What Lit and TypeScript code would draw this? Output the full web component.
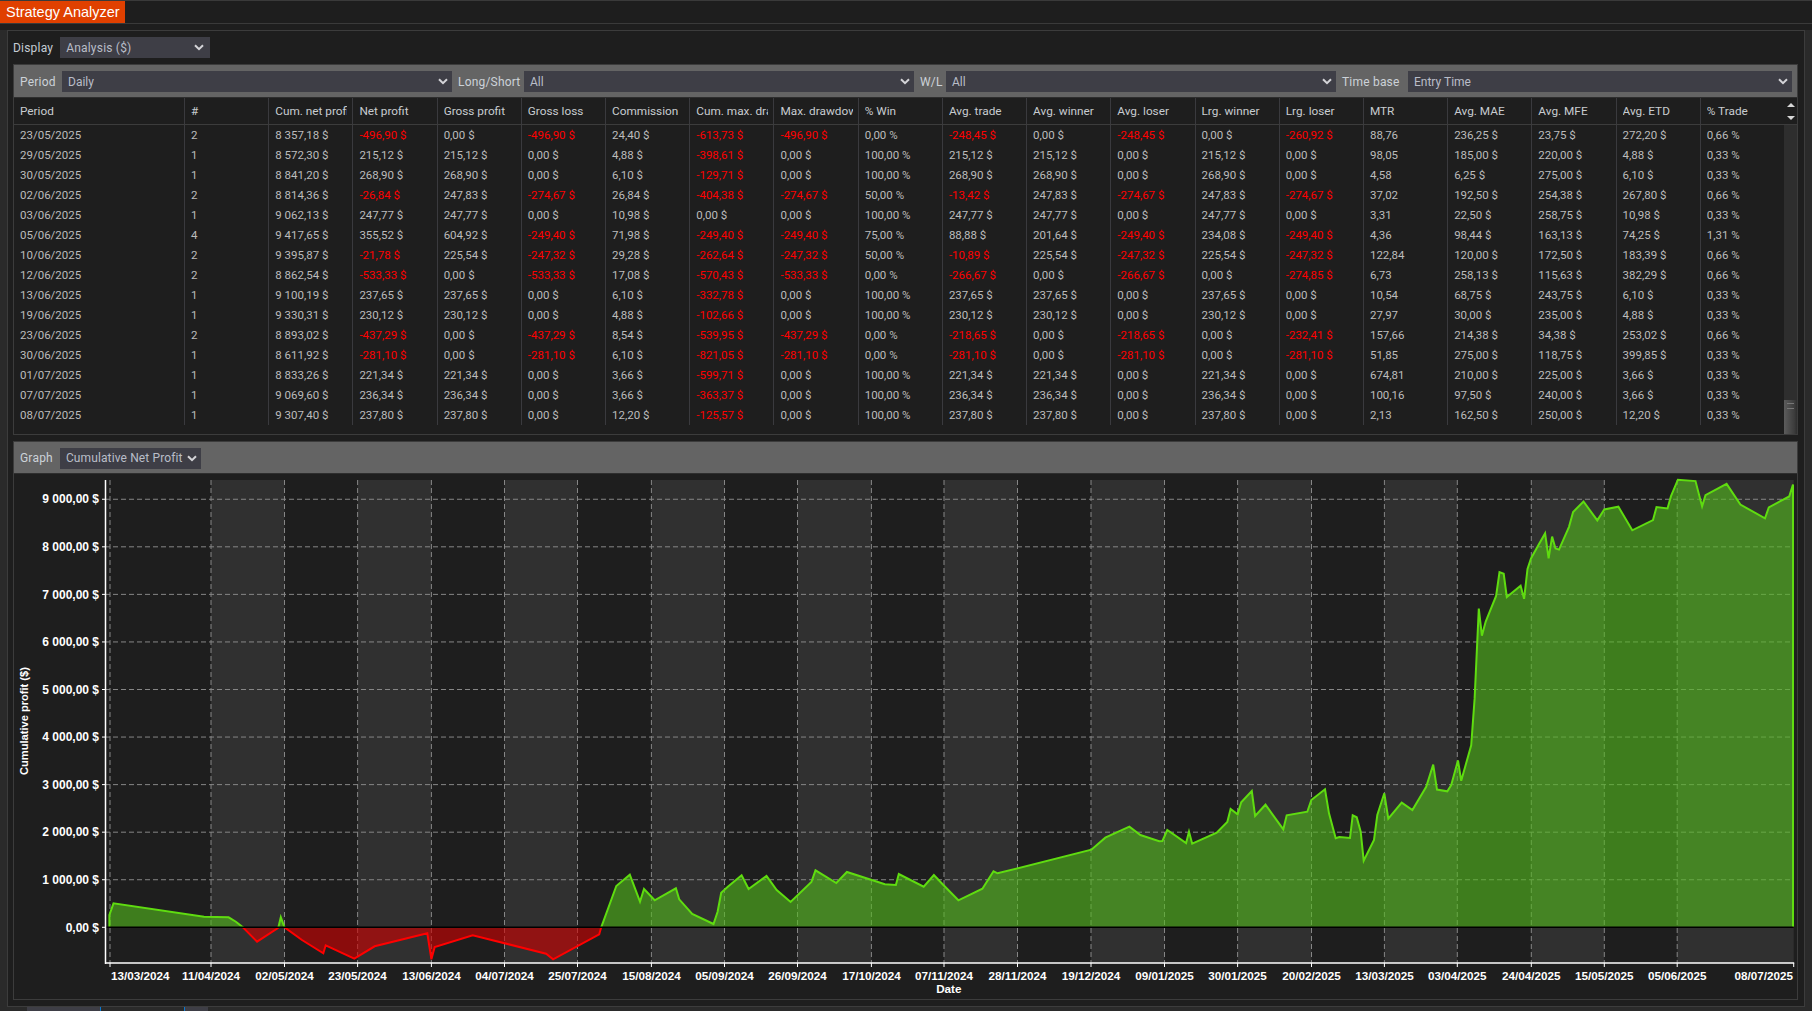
import {LitElement, html, css, svg} from 'lit';
import {customElement} from 'lit/decorators.js';

const columns = [
  'Period', '#', 'Cum. net profit', 'Net profit', 'Gross profit', 'Gross loss', 'Commission',
  'Cum. max. drawdown', 'Max. drawdown', '% Win', 'Avg. trade', 'Avg. winner', 'Avg. loser',
  'Lrg. winner', 'Lrg. loser', 'MTR', 'Avg. MAE', 'Avg. MFE', 'Avg. ETD', '% Trade',
];

const rows = [
  '23/05/2025|2|8 357,18 $|-496,90 $|0,00 $|-496,90 $|24,40 $|-613,73 $|-496,90 $|0,00 %|-248,45 $|0,00 $|-248,45 $|0,00 $|-260,92 $|88,76|236,25 $|23,75 $|272,20 $|0,66 %',
  '29/05/2025|1|8 572,30 $|215,12 $|215,12 $|0,00 $|4,88 $|-398,61 $|0,00 $|100,00 %|215,12 $|215,12 $|0,00 $|215,12 $|0,00 $|98,05|185,00 $|220,00 $|4,88 $|0,33 %',
  '30/05/2025|1|8 841,20 $|268,90 $|268,90 $|0,00 $|6,10 $|-129,71 $|0,00 $|100,00 %|268,90 $|268,90 $|0,00 $|268,90 $|0,00 $|4,58|6,25 $|275,00 $|6,10 $|0,33 %',
  '02/06/2025|2|8 814,36 $|-26,84 $|247,83 $|-274,67 $|26,84 $|-404,38 $|-274,67 $|50,00 %|-13,42 $|247,83 $|-274,67 $|247,83 $|-274,67 $|37,02|192,50 $|254,38 $|267,80 $|0,66 %',
  '03/06/2025|1|9 062,13 $|247,77 $|247,77 $|0,00 $|10,98 $|0,00 $|0,00 $|100,00 %|247,77 $|247,77 $|0,00 $|247,77 $|0,00 $|3,31|22,50 $|258,75 $|10,98 $|0,33 %',
  '05/06/2025|4|9 417,65 $|355,52 $|604,92 $|-249,40 $|71,98 $|-249,40 $|-249,40 $|75,00 %|88,88 $|201,64 $|-249,40 $|234,08 $|-249,40 $|4,36|98,44 $|163,13 $|74,25 $|1,31 %',
  '10/06/2025|2|9 395,87 $|-21,78 $|225,54 $|-247,32 $|29,28 $|-262,64 $|-247,32 $|50,00 %|-10,89 $|225,54 $|-247,32 $|225,54 $|-247,32 $|122,84|120,00 $|172,50 $|183,39 $|0,66 %',
  '12/06/2025|2|8 862,54 $|-533,33 $|0,00 $|-533,33 $|17,08 $|-570,43 $|-533,33 $|0,00 %|-266,67 $|0,00 $|-266,67 $|0,00 $|-274,85 $|6,73|258,13 $|115,63 $|382,29 $|0,66 %',
  '13/06/2025|1|9 100,19 $|237,65 $|237,65 $|0,00 $|6,10 $|-332,78 $|0,00 $|100,00 %|237,65 $|237,65 $|0,00 $|237,65 $|0,00 $|10,54|68,75 $|243,75 $|6,10 $|0,33 %',
  '19/06/2025|1|9 330,31 $|230,12 $|230,12 $|0,00 $|4,88 $|-102,66 $|0,00 $|100,00 %|230,12 $|230,12 $|0,00 $|230,12 $|0,00 $|27,97|30,00 $|235,00 $|4,88 $|0,33 %',
  '23/06/2025|2|8 893,02 $|-437,29 $|0,00 $|-437,29 $|8,54 $|-539,95 $|-437,29 $|0,00 %|-218,65 $|0,00 $|-218,65 $|0,00 $|-232,41 $|157,66|214,38 $|34,38 $|253,02 $|0,66 %',
  '30/06/2025|1|8 611,92 $|-281,10 $|0,00 $|-281,10 $|6,10 $|-821,05 $|-281,10 $|0,00 %|-281,10 $|0,00 $|-281,10 $|0,00 $|-281,10 $|51,85|275,00 $|118,75 $|399,85 $|0,33 %',
  '01/07/2025|1|8 833,26 $|221,34 $|221,34 $|0,00 $|3,66 $|-599,71 $|0,00 $|100,00 %|221,34 $|221,34 $|0,00 $|221,34 $|0,00 $|674,81|210,00 $|225,00 $|3,66 $|0,33 %',
  '07/07/2025|1|9 069,60 $|236,34 $|236,34 $|0,00 $|3,66 $|-363,37 $|0,00 $|100,00 %|236,34 $|236,34 $|0,00 $|236,34 $|0,00 $|100,16|97,50 $|240,00 $|3,66 $|0,33 %',
  '08/07/2025|1|9 307,40 $|237,80 $|237,80 $|0,00 $|12,20 $|-125,57 $|0,00 $|100,00 %|237,80 $|237,80 $|0,00 $|237,80 $|0,00 $|2,13|162,50 $|250,00 $|12,20 $|0,33 %',
].map((r) => r.split('|'));

// x position of each date tick on the chart
const ticks: [number, string][] = [
  [110, '13/03/2024'], [211, '11/04/2024'], [284.5, '02/05/2024'], [357.6, '23/05/2024'],
  [431.4, '13/06/2024'], [504.5, '04/07/2024'], [577.5, '25/07/2024'], [651.4, '15/08/2024'],
  [724.5, '05/09/2024'], [797.5, '26/09/2024'], [871.4, '17/10/2024'], [944, '07/11/2024'],
  [1017.5, '28/11/2024'], [1091, '19/12/2024'], [1164.5, '09/01/2025'], [1237.6, '30/01/2025'],
  [1311.5, '20/02/2025'], [1384.4, '13/03/2025'], [1457.3, '03/04/2025'], [1531.3, '24/04/2025'],
  [1604.3, '15/05/2025'], [1677.2, '05/06/2025'],
];
const chartRight = 1793.7;
const chartTop = 480;
const chartBottom = 963;
const zeroY = 927.3;
const stepY = 47.56;

const equity = `109.4,927.3 109.4,915 113.5,903.3 204,916.7 228.6,917.3 235.9,921.7 242.9,927.3 257.1,941.7
277.6,928.3 278.4,927.3 280.8,917.3 284.5,927.3 302,940 323.3,953.3 325.7,945.3 354.3,958.7 374.7,946.3
427.3,933.3 431.4,959.3 434.7,947 472.7,935.3 546.1,953.7 553.1,959.3 599.2,934.3 601.2,927.3 616.3,886
629.8,874.7 640,901.7 644,889 654.7,900.3 675.9,888.3 679.2,899.3 692.2,914 713.5,924 717.6,911.7
721.2,892.7 727.8,886.7 741.6,875.3 748.6,889 766.5,876 776.7,890 790.6,902 811.4,882 815.5,870.3
836.3,883 846.9,872 884.9,884.3 895.9,885 898.8,874 923.7,886.7 933.9,875 944.1,885.7 958.4,900.3
982.4,888.7 993.5,871.3 997.6,873.3 1091.4,849.7 1105.3,837.7 1129.4,826.7 1140.4,835 1159.2,841.3
1162.4,841 1167.3,830 1186.1,843 1189,831.7 1192.2,843.7 1216.7,832.7 1227.3,822 1230.6,809 1237.6,814.3
1241.2,802.3 1251.8,791 1255.1,816 1265.5,804.7 1283.3,829.3 1286.7,815.3 1307.3,811.7 1311.3,800
1325,789.3 1329,813.3 1335.7,838.3 1339.3,837 1350,838 1352.7,815.3 1356.7,817.3 1360.7,831.7 1363.7,860.7
1374,840 1377.3,815 1384.3,793.3 1388.3,818.7 1401.7,802.6 1412.4,810 1426.2,786.8 1433.2,764.6 1437,789.6
1447.3,791.3 1451.1,785.4 1458,760.4 1461.2,780.8 1471.2,745.3 1474.6,698.9 1478.8,608.6 1481.9,635.7
1485.7,621.6 1496.1,596 1499.5,572.1 1503.7,573.8 1506.8,597 1520.6,585.8 1524.1,598.8 1527.5,568.9
1531,558.4 1537.9,546 1545.1,533.4 1548.6,558.4 1552.1,536.6 1555.5,548.5 1559,549.6 1569,526.8 1573.1,512
1583.5,501.5 1597.3,520.4 1604.3,509.5 1618.4,506.7 1632.3,530.3 1653,520.1 1656.5,507.1 1667.5,508.5
1671,496.2 1677.9,479.7 1695.5,481.1 1702.1,506.4 1705.5,495.1 1726.6,483.9 1740.4,504.6 1765,518.3
1768.8,507.4 1789.2,496.5 1793,484.6 1793,927.3`;

const chevron = html`<svg class="chev" viewBox="0 0 10 7"><path d="M1 1.2l4 4 4-4" fill="none" stroke="currentColor" stroke-width="2"/></svg>`;

@customElement('app-root')
export class AppRoot extends LitElement {
  static override styles = css`
    * {
      box-sizing: border-box;
    }

    :host {
      display: block;
      width: 1812px;
      height: 1011px;
      overflow: hidden;
      background: #1e1e1e;
      font-family: "Roboto", "Liberation Sans", sans-serif;
      font-size: 11.5px;
      color: #bcbcbc;
    }

    .top {
      height: 24px;
      padding-top: 1px;
      border-top: 1px solid #3a3a3a;
      border-bottom: 1px solid #3a3a3a;
    }

    .tab {
      width: 125px;
      height: 22px;
      margin-top: -1px;
      background: #e04000;
      color: #fff;
      font-family: "Liberation Sans", sans-serif;
      font-size: 14.5px;
      line-height: 22px;
      padding-left: 6px;
    }

    .shell {
      height: 987px;
      padding: 6px 7px 0;
      background: linear-gradient(#1e1e1e 6px, #2a2a2a 6px);
    }

    .outer {
      height: 977px;
      border: 1px solid #3c3c3c;
      background: #1e1e1e;
      padding: 6px 6px 6px 5px;
      display: flex;
      flex-direction: column;
    }

    .display {
      display: flex;
      align-items: center;
      height: 21px;
      gap: 6px;
      margin-bottom: 6px;
      font-size: 12px;
      color: #c4ccd4;
      letter-spacing: .2px;
    }

    .sel {
      display: flex;
      align-items: center;
      justify-content: space-between;
      height: 21px;
      padding: 0 4px 0 6px;
      background: #3e3e46;
      color: #b9bdc8;
      font-size: 12px;
      white-space: nowrap;
    }

    .chev {
      width: 10px;
      height: 7px;
      color: #d4d4d8;
      flex: none;
    }

    .display .sel {
      width: 150px;
      margin-left: 1px;
      padding-right: 6px;
    }

    .panel {
      border: 1px solid #3c3c3c;
      display: flex;
      flex-direction: column;
    }

    .table-panel {
      height: 371px;
      margin-bottom: 6px;
    }

    .chart-panel {
      height: 559px;
    }

    .band {
      height: 33px;
      padding: 1px 6px 0;
      background: #646464;
      border-bottom: 1px solid #2e2e2e;
      flex: none;
      font-size: 12px;
      color: #ccd2d8;
      letter-spacing: .2px;
    }

    .filters {
      display: grid;
      grid-template-columns: 36px 390px 60px 390px 20px 390px 60px 384px;
      gap: 6px;
      align-items: center;
    }

    .graph-band {
      display: flex;
      align-items: center;
      gap: 6px;
      height: 32px;
    }

    .band .label {
      white-space: nowrap;
    }

    .band .sel {
      letter-spacing: 0;
    }

    .band .graph-sel {
      width: 141px;
      margin-left: 1px;
      letter-spacing: .12px;
    }

    .tablewrap {
      display: flex;
      flex: 1;
      min-height: 0;
    }

    .grid {
      flex: 1;
      min-width: 0;
      padding-bottom: 8px;
    }

    .row {
      display: grid;
      grid-template-columns: 170px repeat(19, 1fr);
      height: 20px;
    }

    .row.head {
      height: 27px;
      border-bottom: 1px solid #3c3c3c;
      color: #c8ccd0;
      font-size: 11.8px;
    }

    .cell {
      padding: 0 5px 0 6px;
      line-height: 21px;
      white-space: nowrap;
      overflow: hidden;
      border-left: 1px solid #3a3a3e;
    }

    .head .cell {
      line-height: 26px;
    }

    /* long titles are cut off before the next column, at the content edge */
    .head .cell span {
      display: block;
      overflow: hidden;
    }

    .cell:first-child {
      border-left: 0;
    }

    .neg {
      color: #ff0000;
    }

    .scroll {
      width: 13px;
      display: flex;
      flex-direction: column;
      background: #2e2e2e;
    }

    .arrows {
      height: 27px;
      background: #1e1e1e;
      border-bottom: 1px solid #3c3c3c;
      display: flex;
      flex-direction: column;
      align-items: center;
      justify-content: center;
      gap: 9px;
    }

    .arrows svg {
      width: 8px;
      height: 4px;
      display: block;
    }

    .track {
      flex: 1;
      display: flex;
      flex-direction: column;
      justify-content: flex-end;
    }

    .thumb {
      height: 34px;
      background: linear-gradient(90deg, #5c5c5c, #3c3c3c 80%, #2e2e2e);
    }

    .thumb::before {
      content: "";
      display: block;
      height: 4px;
      margin: 3px 3px 0;
      border-top: 1px solid #777;
      border-bottom: 1px solid #777;
    }

    .chart {
      display: block;
      flex: none;
    }

    .chart text {
      font-family: "Liberation Sans", sans-serif;
      font-weight: 700;
      font-size: 11.7px;
      fill: #fff;
    }

    .chart .ylabel {
      font-size: 12px;
    }

    .chart .ytitle {
      font-size: 11.1px;
    }

    .bottom {
      display: flex;
      height: 4px;
    }

    .bottom .t1 {
      margin-left: 20px;
      width: 74px;
      background: #3e3e46;
      border-right: 1px solid #0a78d0;
    }

    .bottom .t2 {
      margin-left: 83px;
      width: 24px;
      background: #3e3e46;
      border-left: 1px solid #0a78d0;
    }
  `;

  renderChart() {
    const bands = [];
    for (let i = 1; i < ticks.length; i += 2) {
      const x1 = ticks[i][0];
      const x2 = i + 1 < ticks.length ? ticks[i + 1][0] : chartRight;
      bands.push(svg`<rect x=${x1} y=${chartTop} width=${x2 - x1} height=${chartBottom - chartTop} fill="#303030"/>`);
    }
    const levels = [0, 1, 2, 3, 4, 5, 6, 7, 8, 9];
    const line = equity.replace(/\s+/g, ' ');
    return html`
      <svg class="chart" width="1783" height="525" viewBox="14 474 1783 525">
        <defs>
          <clipPath id="above"><rect x="100" y="470" width="1700" height=${zeroY - 470}/></clipPath>
          <clipPath id="below"><rect x="100" y=${zeroY} width="1700" height="50"/></clipPath>
        </defs>
        ${bands}
        ${ticks.map(([x]) => svg`<line x1=${x} x2=${x} y1=${chartTop} y2=${chartBottom} stroke="#868686" stroke-dasharray="5 3"/>`)}
        ${levels.slice(1).map((v) => svg`<line x1="105" x2=${chartRight} y1=${zeroY - v * stepY} y2=${zeroY - v * stepY} stroke="#868686" stroke-dasharray="5 3"/>`)}
        <g clip-path="url(#above)">
          <polygon points=${line} fill="#54ba1e" fill-opacity=".61"/>
          <polyline points=${line} fill="none" stroke="#5fdc10" stroke-width="2"/>
        </g>
        <g clip-path="url(#below)">
          <polygon points=${line} fill="#d20000" fill-opacity=".6"/>
          <polyline points=${line} fill="none" stroke="#ff0000" stroke-width="2"/>
        </g>
        <line x1="105" x2=${chartRight} y1=${zeroY} y2=${zeroY} stroke="#000" stroke-width="1.5"/>
        <line x1="105.5" x2="105.5" y1=${chartTop} y2=${chartBottom + 1} stroke="#fff" stroke-width="1.5"/>
        <line x1="105" x2=${chartRight + 0.5} y1=${chartBottom} y2=${chartBottom} stroke="#fff" stroke-width="1.5"/>
        ${levels.map((v) => svg`
          <line x1="102" x2="105" y1=${zeroY - v * stepY} y2=${zeroY - v * stepY} stroke="#fff"/>
          <text class="ylabel" x="99" y=${zeroY - v * stepY + 4.2} text-anchor="end">${v === 0 ? '0,00 $' : `${v} 000,00 $`}</text>`)}
        ${ticks.map(([x, label], i) => svg`
          <line x1=${x} x2=${x} y1=${chartBottom} y2=${chartBottom + 4} stroke="#fff"/>
          <text x=${i === 0 ? x + 1 : x} y="979.5" text-anchor=${i === 0 ? 'start' : 'middle'}>${label}</text>`)}
        <line x1=${chartRight} x2=${chartRight} y1=${chartBottom} y2=${chartBottom + 4} stroke="#fff"/>
        <text x="1793" y="979.5" text-anchor="end">08/07/2025</text>
        <text x="948.8" y="993" text-anchor="middle">Date</text>
        <text class="ytitle" transform="translate(27.5 721) rotate(-90)" text-anchor="middle">Cumulative profit ($)</text>
      </svg>
    `;
  }

  override render() {
    return html`
      <div class="top"><div class="tab">Strategy Analyzer</div></div>
      <div class="shell">
        <div class="outer">
          <div class="display">
            <span>Display</span>
            <div class="sel"><span>Analysis ($)</span>${chevron}</div>
          </div>
          <div class="panel table-panel">
            <div class="band filters">
              <span class="label">Period</span>
              <div class="sel"><span>Daily</span>${chevron}</div>
              <span class="label">Long/Short</span>
              <div class="sel"><span>All</span>${chevron}</div>
              <span class="label">W/L</span>
              <div class="sel"><span>All</span>${chevron}</div>
              <span class="label">Time base</span>
              <div class="sel"><span>Entry Time</span>${chevron}</div>
            </div>
            <div class="tablewrap">
              <div class="grid">
                <div class="row head">${columns.map((c) => html`<div class="cell"><span>${c}</span></div>`)}</div>
                ${rows.map((r) => html`
                  <div class="row">
                    ${r.map((v) => html`<div class="cell ${v.startsWith('-') ? 'neg' : ''}">${v}</div>`)}
                  </div>`)}
              </div>
              <div class="scroll">
                <div class="arrows">
                  <svg viewBox="0 0 8 4"><path d="M0 4L4 0l4 4z" fill="#d8d8d8"/></svg>
                  <svg viewBox="0 0 8 4"><path d="M0 0l4 4 4-4z" fill="#d8d8d8"/></svg>
                </div>
                <div class="track"><div class="thumb"></div></div>
              </div>
            </div>
          </div>
          <div class="panel chart-panel">
            <div class="band graph-band">
              <span class="label">Graph</span>
              <div class="sel graph-sel"><span>Cumulative Net Profit</span>${chevron}</div>
            </div>
            ${this.renderChart()}
          </div>
        </div>
        <div class="bottom"><div class="t1"></div><div class="t2"></div></div>
      </div>
    `;
  }
}

declare global {
  interface HTMLElementTagNameMap {
    'app-root': AppRoot;
  }
}
